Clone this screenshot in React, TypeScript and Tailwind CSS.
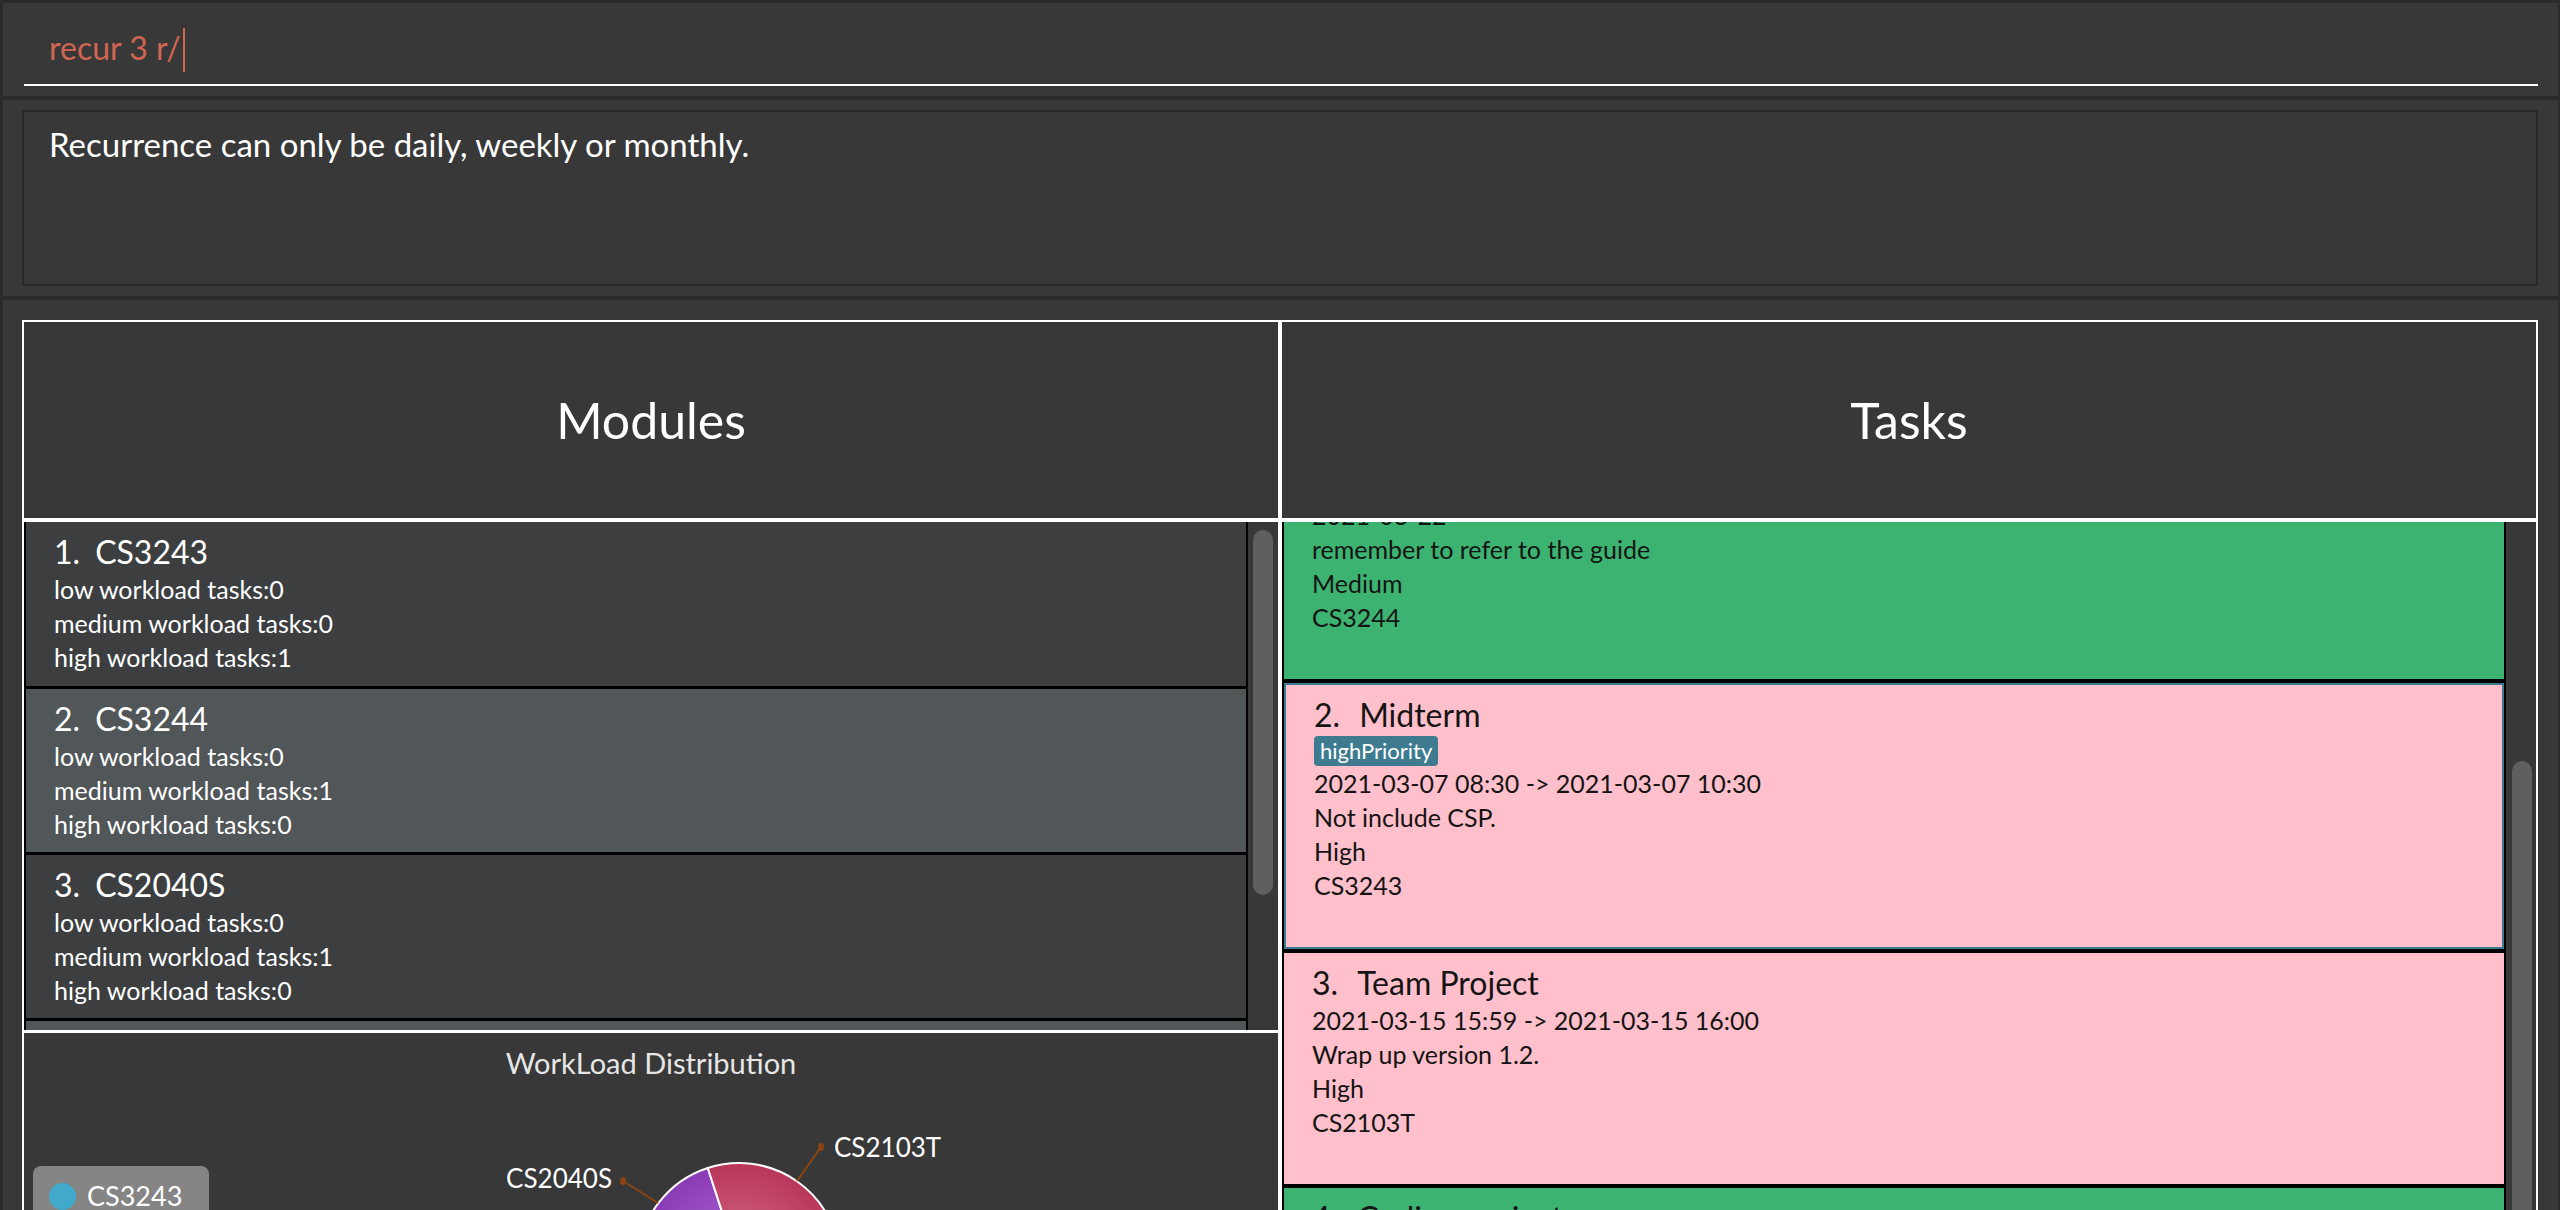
import React from "react";

type Module = { code: string; low: number; medium: number; high: number };

type Task = {
  name?: string;
  tags?: string[];
  date?: string;
  description?: string;
  workload?: string;
  module?: string;
  tone: "green" | "pink";
  selected?: boolean;
  scrolled?: boolean;
};

const modules: Module[] = [
  { code: "CS3243", low: 0, medium: 0, high: 1 },
  { code: "CS3244", low: 0, medium: 1, high: 0 },
  { code: "CS2040S", low: 0, medium: 1, high: 0 },
];

// first task is scrolled half out of view, last one only shows its top edge
const tasks: Task[] = [
  {
    date: "2021-03-22",
    description: "remember to refer to the guide",
    workload: "Medium",
    module: "CS3244",
    tone: "green",
    scrolled: true,
  },
  {
    name: "Midterm",
    tags: ["highPriority"],
    date: "2021-03-07 08:30 -> 2021-03-07 10:30",
    description: "Not include CSP.",
    workload: "High",
    module: "CS3243",
    tone: "pink",
    selected: true,
  },
  {
    name: "Team Project",
    date: "2021-03-15 15:59 -> 2021-03-15 16:00",
    description: "Wrap up version 1.2.",
    workload: "High",
    module: "CS2103T",
    tone: "pink",
  },
  {
    name: "Coding project",
    tone: "green",
  },
];

function ModuleCard({ module, index }: { module: Module; index: number }) {
  return (
    <div
      className={`shrink-0 border-b-[3px] border-black pl-[28px] pt-[10px] text-white ${
        index === 0 ? "h-[167px]" : "h-[166px]"
      } ${index % 2 === 0 ? "bg-[#3c3e3f]" : "bg-[#515658]"}`}
    >
      <div className="whitespace-nowrap text-[32px] leading-[40px]">
        <span>{index + 1}.</span>
        <span className="ml-[15px]">{module.code}</span>
      </div>
      <div className="text-[25px] leading-[34px]">low workload tasks:{module.low}</div>
      <div className="text-[25px] leading-[34px]">medium workload tasks:{module.medium}</div>
      <div className="text-[25px] leading-[34px]">high workload tasks:{module.high}</div>
    </div>
  );
}

function TaskCard({ task, index }: { task: Task; index: number }) {
  return (
    <div
      className={`shrink-0 border-b-4 border-black ${
        task.tone === "green" ? "bg-[#3cb371]" : "bg-[#ffc0cb]"
      } ${task.scrolled ? "-mt-[24px]" : ""}`}
    >
      <div
        className={`pl-[28px] pb-[45px] text-[#141414] ${task.scrolled ? "" : "pt-[10px]"} ${
          task.selected ? "border-2 border-[#3e7b91]" : ""
        }`}
      >
        {task.name && (
          <div className="whitespace-nowrap text-[32px] leading-[40px]">
            <span>{index + 1}.</span>
            <span className="ml-[19px]">{task.name}</span>
          </div>
        )}
        {task.tags && (
          <div className="flex h-[31px] gap-[6px] pt-[1px]">
            {task.tags.map((tag) => (
              <span
                key={tag}
                className="inline-block h-[30px] rounded-[4px] bg-[#3e7b91] px-[6px] text-[22px] leading-[30px] text-white"
              >
                {tag}
              </span>
            ))}
          </div>
        )}
        {task.date && <div className="text-[25px] leading-[34px]">{task.date}</div>}
        {task.description && <div className="text-[25px] leading-[34px]">{task.description}</div>}
        {task.workload && <div className="text-[25px] leading-[34px]">{task.workload}</div>}
        {task.module && <div className="text-[25px] leading-[34px]">{task.module}</div>}
      </div>
    </div>
  );
}

function WorkloadChart() {
  // pie centre and radius in panel coordinates
  const cx = 715;
  const cy = 231;
  const r = 101;
  const pt = (deg: number) => {
    const a = (deg * Math.PI) / 180;
    return `${(cx + r * Math.sin(a)).toFixed(2)},${(cy - r * Math.cos(a)).toFixed(2)}`;
  };

  return (
    <div className="relative h-[400px]">
      <div className="flex h-[60px] items-center justify-center text-[29px] text-[#e6e6e6]">
        WorkLoad Distribution
      </div>

      <svg className="absolute left-0 top-0" width="1254" height="400" viewBox="0 0 1254 400">
        <defs>
          <radialGradient id="gRed" cx={cx} cy={cy} r={r} gradientUnits="userSpaceOnUse">
            <stop offset="0%" stopColor="#d8708c" />
            <stop offset="100%" stopColor="#b8365a" />
          </radialGradient>
          <radialGradient id="gPurple" cx={cx} cy={cy} r={r} gradientUnits="userSpaceOnUse">
            <stop offset="0%" stopColor="#b06ad6" />
            <stop offset="100%" stopColor="#8a3bb6" />
          </radialGradient>
          <radialGradient id="gBlue" cx={cx} cy={cy} r={r} gradientUnits="userSpaceOnUse">
            <stop offset="0%" stopColor="#6cc0da" />
            <stop offset="100%" stopColor="#3798b6" />
          </radialGradient>
        </defs>
        <path
          d={`M${cx},${cy} L${pt(88)} A${r},${r} 0 1 1 ${pt(-88)} Z`}
          fill="url(#gBlue)"
          stroke="#ffffff"
          strokeWidth="2"
        />
        <path
          d={`M${cx},${cy} L${pt(-88)} A${r},${r} 0 0 1 ${pt(-18)} Z`}
          fill="url(#gPurple)"
          stroke="#ffffff"
          strokeWidth="2"
        />
        <path
          d={`M${cx},${cy} L${pt(-18)} A${r},${r} 0 0 1 ${pt(88)} Z`}
          fill="url(#gRed)"
          stroke="#ffffff"
          strokeWidth="2"
        />

        <line x1="773" y1="148" x2="797" y2="114" stroke="#8b4513" strokeWidth="2" />
        <ellipse cx="797" cy="114" rx="3" ry="4" fill="#8b4513" />
        <text x="810" y="124" fill="#ffffff" fontSize="26" fontFamily="Lato, 'Liberation Sans', sans-serif">
          CS2103T
        </text>

        <line x1="634" y1="170" x2="599" y2="148" stroke="#8b4513" strokeWidth="2" />
        <ellipse cx="599" cy="148" rx="3" ry="4" fill="#8b4513" />
        <text
          x="588"
          y="155"
          fill="#ffffff"
          fontSize="26"
          textAnchor="end"
          fontFamily="Lato, 'Liberation Sans', sans-serif"
        >
          CS2040S
        </text>
      </svg>

      <div className="absolute left-[9px] top-[133px] w-[176px] rounded-[8px] bg-[#858585] pb-[16px] pl-[16px] pt-[16px]">
        <div className="flex h-[28px] items-center gap-[11px]">
          <span className="h-[27px] w-[27px] rounded-full bg-[#41a9c9]" />
          <span className="text-[27px] leading-[28px] text-white">CS3243</span>
        </div>
      </div>
    </div>
  );
}

export default function App(): React.JSX.Element {
  return (
    <div className="flex h-[1210px] w-[2560px] flex-col overflow-hidden bg-[#2b2b2b] pl-[3px] pr-[2px] pt-[3px] font-['Lato','Liberation_Sans',sans-serif]">
      {/* command box */}
      <div className="h-[93px] shrink-0 bg-[#383838] pl-[21px] pr-[20px] pt-[24px]">
        <div className="flex h-[59px] items-start border-b-2 border-white pl-[25px]">
          <span className="whitespace-nowrap text-[32px] leading-[42px] text-[#d06651]">recur 3 r/</span>
          <span className="ml-[2px] mt-[1px] h-[44px] w-[2px] bg-[#d06651]" />
        </div>
      </div>

      {/* result display */}
      <div className="mt-[4px] h-[196px] shrink-0 bg-[#383838] pl-[19px] pr-[20px] pt-[10px]">
        <div className="h-[176px] border-2 border-[#2a2a2a] pl-[25px] pt-[11px]">
          <div className="text-[33px] leading-[42px] text-white">
            Recurrence can only be daily, weekly or monthly.
          </div>
        </div>
      </div>

      {/* main panels */}
      <div className="mt-[4px] grid min-h-0 flex-1 grid-cols-2 bg-[#383838] pl-[19px] pr-[20px] pt-[20px]">
        <div className="flex min-h-0 flex-col border-x-2 border-t-2 border-white">
          <div className="flex h-[200px] shrink-0 items-center justify-center border-b-4 border-white text-[50px] text-white">
            Modules
          </div>
          <div className="flex h-[508px] shrink-0">
            <div className="flex flex-1 flex-col overflow-hidden border-x-2 border-black">
              {modules.map((m, i) => (
                <ModuleCard key={m.code} module={m} index={i} />
              ))}
              <div className="h-[166px] shrink-0 bg-[#515658]" />
            </div>
            <div className="w-[30px] bg-[#383838] pl-[5px] pr-[5px] pt-[8px]">
              <div className="h-[365px] rounded-[10px] bg-[#5f5f5f]" />
            </div>
          </div>
          <div className="flex-1 border-t-[3px] border-white bg-[#383838]">
            <WorkloadChart />
          </div>
        </div>

        <div className="flex min-h-0 flex-col border-x-2 border-t-2 border-white">
          <div className="flex h-[200px] shrink-0 items-center justify-center border-b-4 border-white text-[50px] text-white">
            Tasks
          </div>
          <div className="flex min-h-0 flex-1">
            <div className="flex flex-1 flex-col overflow-hidden border-x-2 border-black">
              {tasks.map((t, i) => (
                <TaskCard key={i} task={t} index={i} />
              ))}
            </div>
            <div className="w-[30px] bg-[#383838] pl-[6px] pr-[4px] pt-[239px]">
              <div className="h-[600px] rounded-[10px] bg-[#5f5f5f]" />
            </div>
          </div>
        </div>
      </div>
    </div>
  );
}
